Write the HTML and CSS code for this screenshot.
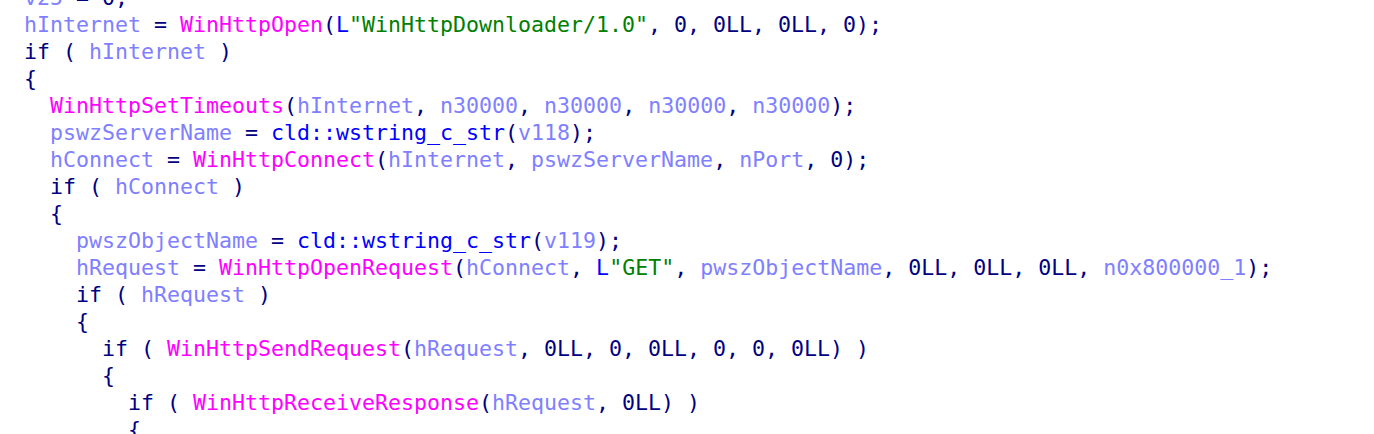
FILE: index.html
```html
<!DOCTYPE html>
<html>
<head>
<meta charset="utf-8">
<link rel="stylesheet" href="styles.css">
</head>
<body>
<pre class="code"><span class="v">v25</span> = 0;
<span class="v">hInternet</span> = <span class="f">WinHttpOpen</span>(<span class="n">L</span><span class="s">"WinHttpDownloader/1.0"</span>, 0, 0LL, 0LL, 0);
if ( <span class="v">hInternet</span> )
{
  <span class="f">WinHttpSetTimeouts</span>(<span class="v">hInternet</span>, <span class="v">n30000</span>, <span class="v">n30000</span>, <span class="v">n30000</span>, <span class="v">n30000</span>);
  <span class="v">pswzServerName</span> = <span class="n">cld::wstring_c_str</span>(<span class="v">v118</span>);
  <span class="v">hConnect</span> = <span class="f">WinHttpConnect</span>(<span class="v">hInternet</span>, <span class="v">pswzServerName</span>, <span class="v">nPort</span>, 0);
  if ( <span class="v">hConnect</span> )
  {
    <span class="v">pwszObjectName</span> = <span class="n">cld::wstring_c_str</span>(<span class="v">v119</span>);
    <span class="v">hRequest</span> = <span class="f">WinHttpOpenRequest</span>(<span class="v">hConnect</span>, <span class="n">L</span><span class="s">"GET"</span>, <span class="v">pwszObjectName</span>, 0LL, 0LL, 0LL, <span class="v">n0x800000_1</span>);
    if ( <span class="v">hRequest</span> )
    {
      if ( <span class="f">WinHttpSendRequest</span>(<span class="v">hRequest</span>, 0LL, 0, 0LL, 0, 0, 0LL) )
      {
        if ( <span class="f">WinHttpReceiveResponse</span>(<span class="v">hRequest</span>, 0LL) )
        {
</pre>
</body>
</html>
```
FILE: styles.css
```css
html, body {
  margin: 0;
  padding: 0;
  background: #ffffff;
  overflow: hidden;
}

.code {
  margin: -16px 0 0 0;
  padding: 0 0 0 24px;
  font-family: "DejaVu Sans Mono", "Liberation Mono", monospace;
  font-size: 21.6px;
  line-height: 27px;
  color: #000080;
  white-space: pre;
}

.v {
  color: #8080ff;
}

.f {
  color: #ff00ff;
}

.s {
  color: #008000;
}

.n {
  color: #0000ff;
}
```
